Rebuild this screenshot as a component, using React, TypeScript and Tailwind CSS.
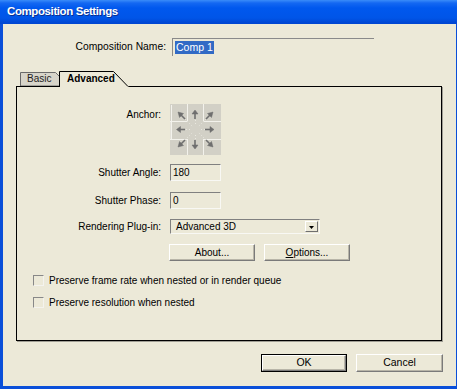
import React from 'react';

const Field = ({ className, children }: { className: string; children?: React.ReactNode }) => (
  <div
    className={`h-[17px] border-t border-l border-b border-r border-t-[#808080] border-l-[#808080] border-b-[#f8f8f4] border-r-[#f8f8f4] flex items-center pl-[2px] ${className}`}
  >
    {children}
  </div>
);

const Button = ({ className, children }: { className: string; children: React.ReactNode }) => (
  <div
    className={`flex items-center justify-center border-t border-l border-b border-r border-t-white border-l-white border-b-[#7a7a7a] border-r-[#7a7a7a] shadow-[inset_-1px_-1px_0_#b8b5a8] ${className}`}
  >
    {children}
  </div>
);

const Checkbox = ({ label }: { label: string }) => (
  <div className="flex items-center ml-[16px] h-[11px]">
    <div className="w-[11px] h-[11px] border-t border-l border-b border-r border-t-[#888] border-l-[#888] border-b-[#f4f3ee] border-r-[#f4f3ee]" />
    <span className="ml-[5px] leading-none">{label}</span>
  </div>
);

const AnchorGrid = () => (
  <svg width="51" height="51" viewBox="0 0 51 51">
    <rect x="0" y="0" width="51" height="51" fill="#d2d0c6" />
    <g stroke="#f3f2ec" strokeWidth="1" fill="none">
      <path d="M1.5 1 V17 M17.5 0 V17 M33.5 0 V17 M0 17.5 H17 M34 17.5 H51" />
      <path d="M17.5 35 V51 M33.5 35 V51 M0 35.5 H17 M34 35.5 H51" />
      <path d="M0 17.5 V35 M1.5 18 V35" />
    </g>
    <g stroke="#e9e8e0" strokeWidth="1" strokeDasharray="1 2">
      <path d="M15 15 L23 23 M36 15 L28 23 M15 36 L23 28 M36 36 L28 28" />
      <path d="M25.5 16 V22 M25.5 35 V29 M16 25.5 H22 M35 25.5 H29" />
    </g>
    <g fill="#6f6f6f" stroke="#6f6f6f" strokeWidth="1.6">
      <path d="M25 15 V9" />
      <path d="M25 6 L22 10 H28 Z" strokeWidth="0.5" />
      <path d="M25 36 V42" />
      <path d="M25 45 L22 41 H28 Z" strokeWidth="0.5" />
      <path d="M15 25.5 H10" />
      <path d="M6.5 25.5 L10.5 22.5 V28.5 Z" strokeWidth="0.5" />
      <path d="M35 25.5 H40" />
      <path d="M44 25.5 L40 22.5 V28.5 Z" strokeWidth="0.5" />
      <path d="M15 15 L11 11" />
      <path d="M8 8 L13.5 9.5 L9.5 13.5 Z" strokeWidth="0.5" />
      <path d="M36 15 L40 11" />
      <path d="M43 8 L37.5 9.5 L41.5 13.5 Z" strokeWidth="0.5" />
      <path d="M15 36 L11 40" />
      <path d="M8 43 L9.5 37.5 L13.5 41.5 Z" strokeWidth="0.5" />
      <path d="M36 36 L40 40" />
      <path d="M43 43 L41.5 37.5 L37.5 41.5 Z" strokeWidth="0.5" />
    </g>
  </svg>
);

export default function App() {
  return (
    <div className="w-[457px] h-[389px] flex flex-col bg-[#0a4fd9] font-['Liberation_Sans',Arial,sans-serif] text-[10px] text-black select-none">
      {/* title bar */}
      <div className="h-[24px] shrink-0 flex items-center pl-[7px] bg-[linear-gradient(to_bottom,#3a8cf9_0px,#1468f2_3px,#0058ee_8px,#0055e8_18px,#0046d2_23px)]">
        <span className="text-white font-bold text-[11.5px] tracking-[-0.4px] [text-shadow:1px_1px_0_#0b2f8f]">
          Composition Settings
        </span>
      </div>

      {/* body */}
      <div className="flex-1 ml-[3px] mr-[1px] mb-[3px] bg-[#ece9d8] flex flex-col">
        {/* name row */}
        <div className="mt-[14px] flex items-center h-[18px]">
          <div className="w-[163px] text-right text-[10.3px]">Composition Name:</div>
          <div className="ml-[6px] w-[202px] h-[18px] border-t border-l border-t-[#8a8a8a] border-l-[#8a8a8a] flex items-center pl-[2px]">
            <span className="bg-[#316ac5] text-white px-[1px] h-[13px] leading-[13px] text-[10.5px]">Comp 1</span>
          </div>
        </div>

        {/* tabs */}
        <div className="mt-[15px] ml-[17px] h-[16px] flex items-end relative z-10 -mb-[1px]">
          <div className="relative w-[40px] h-[14px] mb-[1px] flex items-center pl-[7px]">
            <svg className="absolute inset-0" width="40" height="14" viewBox="0 0 40 14">
              <path d="M0.5 14 V0.5 H35.5 L39.5 4.5 V14 Z" fill="#d8d5ca" stroke="#6a6a6a" />
            </svg>
            <span className="relative leading-none text-[#222]">Basic</span>
          </div>
          <div className="relative -ml-[1px] w-[70px] h-[16px] flex items-center pl-[8px]">
            <svg className="absolute inset-0" width="70" height="16" viewBox="0 0 70 16">
              <path d="M0.5 16 V0.5 H54.5 L69.5 15.5 V16 Z" fill="#ece9d8" stroke="none" />
              <path d="M0.5 16 V0.5 H54.5 L69 15.5" fill="none" stroke="#000" />
            </svg>
            <span className="relative font-bold leading-none">Advanced</span>
          </div>
        </div>

        {/* panel */}
        <div className="ml-[13px] w-[426px] h-[255px] shrink-0 border border-black shadow-[1px_1px_0_#a09e94] flex flex-col">
          <div className="mt-[17px] flex h-[51px]">
            <div className="w-[144px] text-right pt-[3px]">Anchor:</div>
            <div className="ml-[9px]">
              <AnchorGrid />
            </div>
          </div>

          <div className="mt-[9px] flex items-center">
            <div className="w-[144px] text-right">Shutter Angle:</div>
            <Field className="ml-[9px] w-[51px]">180</Field>
          </div>

          <div className="mt-[11px] flex items-center">
            <div className="w-[144px] text-right">Shutter Phase:</div>
            <Field className="ml-[9px] w-[51px]">0</Field>
          </div>

          <div className="mt-[10px] flex items-center">
            <div className="w-[144px] text-right">Rendering Plug-in:</div>
            <div className="ml-[9px] w-[150px] h-[15px] border-t border-l border-b border-r border-t-[#808080] border-l-[#808080] border-b-[#f8f8f4] border-r-[#f8f8f4] flex items-center">
              <span className="ml-[5px] flex-1">Advanced 3D</span>
              <div className="w-[13px] h-[11px] mr-[1px] border-t border-l border-b border-r border-t-white border-l-white border-b-[#6f6f6f] border-r-[#6f6f6f] flex items-end justify-center pb-[2px]">
                <svg width="5" height="3" viewBox="0 0 5 3">
                  <path d="M0 0 H5 L2.5 3 Z" fill="#000" />
                </svg>
              </div>
            </div>
          </div>

          <div className="mt-[10px] flex">
            <div className="w-[152px]" />
            <Button className="w-[86px] h-[17px]">About...</Button>
            <Button className="ml-[9px] w-[86px] h-[17px]">
              <span>
                <span className="underline">O</span>ptions...
              </span>
            </Button>
          </div>

          <div className="mt-[14px]">
            <Checkbox label="Preserve frame rate when nested or in render queue" />
          </div>
          <div className="mt-[11px]">
            <Checkbox label="Preserve resolution when nested" />
          </div>
        </div>

        {/* bottom buttons */}
        <div className="mt-[13px] flex justify-end mr-[13px]">
          <div className="w-[86px] h-[18px] border border-black">
            <Button className="w-full h-full text-[10.5px]">OK</Button>
          </div>
          <Button className="ml-[9px] w-[87px] h-[18px] text-[10.5px]">Cancel</Button>
        </div>
      </div>
    </div>
  );
}
